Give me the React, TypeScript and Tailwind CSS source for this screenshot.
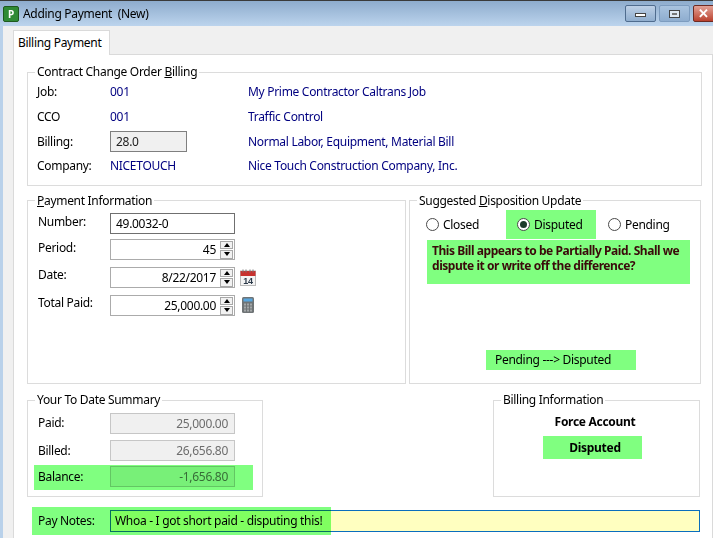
import React from "react";

const font = "[font-family:'Noto_Sans','Open_Sans',sans-serif]";

function Group({ legend, className, children, legendClass = "" }: { legend: React.ReactNode; className: string; children: React.ReactNode; legendClass?: string }) {
  return (
    <fieldset className={`border border-[#dcdcdc] min-w-0 ${className}`}>
      <legend className={`ml-[7px] px-[2px] text-[12px] leading-[16px] text-[#000] ${legendClass}`}>{legend}</legend>
      {children}
    </fieldset>
  );
}

function Spin() {
  return (
    <div className="ml-auto mr-[1px] flex h-[18px] w-[13px] flex-col gap-[1px]">
      <div className="flex h-[8.5px] items-center justify-center border border-[#a8a8a8] bg-[#f2f2f2]">
        <div className="h-0 w-0 border-x-[3.5px] border-b-[4px] border-x-transparent border-b-black" />
      </div>
      <div className="flex h-[8.5px] items-center justify-center border border-[#a8a8a8] bg-[#f2f2f2]">
        <div className="h-0 w-0 border-x-[3.5px] border-t-[4px] border-x-transparent border-t-black" />
      </div>
    </div>
  );
}

function SpinField({ label, value, after, top, labelTop }: { label: string; value: string; after?: React.ReactNode; top: string; labelTop: string }) {
  return (
    <div className={`flex items-start ${top}`}>
      <div className={`w-[82px] pl-[10px] text-[12px] leading-[16px] ${labelTop}`}>{label}</div>
      <div className="flex h-[21px] w-[125px] items-center border border-[#ababab] bg-white pl-[4px]">
        <span className="flex-1 pr-[4px] text-right text-[12px] leading-[16px]">{value}</span>
        <Spin />
      </div>
      {after}
    </div>
  );
}

function Calendar() {
  return (
    <svg width="16" height="17" viewBox="0 0 16 17" className="ml-[5px] mt-[2px]">
      <rect x="0.5" y="2" width="15" height="14.5" fill="#f4f4f4" stroke="#b9b9b9" />
      <rect x="0.5" y="2" width="15" height="5" fill="#c8312e" />
      <path d="M3 0.5v3M6 0.5v3M10 0.5v3M13 0.5v3" stroke="#777" strokeWidth="1" />
      <text x="8" y="15" textAnchor="middle" fontSize="9" fontWeight="700" fill="#2c3a4a" fontFamily="Liberation Sans, sans-serif">14</text>
    </svg>
  );
}

function Calculator() {
  return (
    <svg width="12" height="16" viewBox="0 0 12 16" className="ml-[7px] mt-[2px]">
      <rect x="0" y="0" width="12" height="16" rx="1.5" fill="#6f7476" />
      <rect x="1.5" y="1.5" width="9" height="3" fill="#58a7e0" />
      <path d="M2 6.5h2v2h-2zM5 6.5h2v2h-2zM8 6.5h2v2h-2zM2 9.5h2v2h-2zM5 9.5h2v2h-2zM8 9.5h2v2h-2zM2 12.5h2v2h-2zM5 12.5h2v2h-2zM8 12.5h2v2h-2z" fill="#a4a8a9" />
    </svg>
  );
}

function Radio({ on }: { on?: boolean }) {
  return (
    <div className="mr-[4px] flex h-[13px] w-[13px] items-center justify-center rounded-full border border-[#4a4a4a] bg-white">
      {on && <div className="h-[7px] w-[7px] rounded-full bg-[#1c3b2a]" />}
    </div>
  );
}

function Disabled({ value }: { value: string }) {
  return (
    <div className="flex h-[21px] w-[125px] items-center justify-end border border-[#c6c6c6] bg-[#f0f0f0] pr-[6px] text-[12px] leading-[16px] text-[#6d6d6d]">
      {value}
    </div>
  );
}

export default function App() {
  return (
    <div className={`flex h-[538px] w-[713px] flex-col overflow-hidden bg-[#b9d1ea] tracking-[-0.3px] text-black ${font}`}>
      <div className="h-[1px] bg-[#3a3a3a]" />
      <div className="flex h-[25px] items-center bg-gradient-to-b from-[#8eaccd] to-[#bcd4ed] pl-[3px]">
        <div className="flex h-[16px] w-[16px] items-center justify-center rounded-[2px] border border-[#1e5a1e] bg-[#2f8a35] text-[10px] font-bold leading-none text-white">P</div>
        <div className="ml-[4px] whitespace-pre text-[12px] leading-[16px]">Adding Payment  (New)</div>
        <div className="ml-auto flex h-[17px] items-stretch gap-[3px] self-start mt-[4px] -mr-[1px]">
          <div className="flex w-[31px] items-center justify-center rounded-[2px] border border-[#4f6c8e] bg-gradient-to-b from-[#bdd0e6] to-[#90aecf]">
            <div className="mt-[3px] h-[4px] w-[11px] border border-[#444] bg-white" />
          </div>
          <div className="flex w-[31px] items-center justify-center rounded-[2px] border border-[#7d9cbf] bg-gradient-to-b from-[#a9c3df] to-[#8eadcf]">
            <div className="flex h-[8px] w-[11px] items-center justify-center border border-[#444] bg-[#dfe8f2]"><div className="h-[2px] w-[5px] bg-[#777]" /></div>
          </div>
          <div className="flex w-[21px] items-center justify-center rounded-l-[2px] border border-[#6e2a22] bg-gradient-to-b from-[#e2a196] to-[#b9402e] text-[13px] font-bold leading-none text-white">✕</div>
        </div>
      </div>
      <div className="ml-[3px] flex min-h-0 flex-1 flex-col bg-[#f0f0f0] pl-[10px] pt-[4px]">
        <div className="relative z-10 -mb-px flex h-[25px] w-[97px] items-center border border-b-0 border-[#dadada] bg-white pl-[4px] text-[12px] leading-[16px]">Billing Payment</div>
        <div className="min-h-0 flex-1 border border-[#dadada] border-b-0 bg-white pl-[13px] pr-[10px] pt-[9px]">
          <Group
            legend={<>Contract Change Order <u>B</u>illing</>}
            className="h-[122px] w-[675px]"
          >
            <div className="grid grid-cols-[73px_138px_1fr] grid-rows-[25px_25px_25px_23px] items-center pl-[9px] text-[12px] leading-[16px] -mt-[1px]">
              <div>Job:</div>
              <div className="text-[#000080]">001</div>
              <div className="text-[#000080]">My Prime Contractor Caltrans Job</div>
              <div>CCO</div>
              <div className="text-[#000080]">001</div>
              <div className="text-[#000080]">Traffic Control</div>
              <div>Billing:</div>
              <div className="flex h-[21px] w-[77px] items-center border border-[#7f7f7f] bg-[#f0f0f0] pl-[5px] text-[#222]">28.0</div>
              <div className="text-[#000080]">Normal Labor, Equipment, Material Bill</div>
              <div>Company:</div>
              <div className="text-[#000080]">NICETOUCH</div>
              <div className="text-[#000080]">Nice Touch Construction Company, Inc.</div>
            </div>
          </Group>

          <div className="mt-[6px] flex gap-[3px]">
            <Group legend={<><u>P</u>ayment Information</>} legendClass="translate-y-[1px]" className="h-[192px] w-[379px]">
              <div className="mt-[5px] flex items-start">
                <div className="w-[82px] pl-[10px] pt-[1px] text-[12px] leading-[16px]">Number:</div>
                <div className="flex h-[21px] w-[125px] items-center border border-[#6f6f6f] bg-white pl-[5px] text-[12px] leading-[16px]">49.0032-0</div>
              </div>
              <SpinField label="Period:" value="45" top="mt-[5px]" labelTop="pt-[1px]" />
              <SpinField label="Date:" value="8/22/2017" top="mt-[7px]" labelTop="pt-0" after={<Calendar />} />
              <SpinField label="Total Paid:" value="25,000.00" top="mt-[7px]" labelTop="pt-0" after={<Calculator />} />
            </Group>
            <Group legend={<>Suggested <u>D</u>isposition Update</>} legendClass="translate-y-[1px]" className="h-[192px] w-[292px]">
              <div className="mt-[2px] flex items-stretch pl-[16px] text-[12px] leading-[16px]">
                <div className="flex w-[80px] items-center"><Radio />Closed</div>
                <div className="flex h-[29px] w-[90px] items-center bg-[#80ff80] pl-[11px]"><Radio on />Disputed</div>
                <div className="ml-[12px] flex items-center"><Radio />Pending</div>
              </div>
              <div className="ml-[17px] mt-[1px] h-[44px] w-[263px] whitespace-nowrap bg-[#80ff80] px-[5px] pt-[3px] text-[12px] font-bold leading-[15px] tracking-[-0.45px] text-[#3a0a0a]">
                This Bill appears to be Partially Paid. Shall we<br />dispute it or write off the difference?
              </div>
              <div className="ml-[76px] mt-[66px] flex h-[20px] w-[150px] items-center bg-[#80ff80] pl-[9px] text-[12px] leading-[16px]">Pending ---&gt; Disputed</div>
            </Group>
          </div>

          <div className="mt-[8px] flex items-start justify-between pr-[2px]">
            <Group legend="Your To Date Summary" className="h-[105px] w-[236px]">
              <div className="relative">
                <div className="mt-[5px] flex items-center">
                  <div className="w-[82px] pl-[10px] pb-[2px] text-[12px] leading-[16px]">Paid:</div>
                  <Disabled value="25,000.00" />
                </div>
                <div className="mt-[6px] flex items-center">
                  <div className="w-[82px] pl-[10px] text-[12px] leading-[16px]">Billed:</div>
                  <Disabled value="26,656.80" />
                </div>
                <div className="mt-[5px] flex items-center">
                  <div className="w-[82px] pl-[10px] text-[12px] leading-[16px]">Balance:</div>
                  <Disabled value="-1,656.80" />
                </div>
                <div className="absolute bottom-[-3px] left-[6px] h-[25px] w-[219px] bg-[#80ff80] mix-blend-multiply" />
              </div>
            </Group>
            <Group legend="Billing Information" className="h-[105px] w-[207px]">
              <div className="mt-[6px] pr-[3px] text-center text-[12px] font-bold leading-[16px]">Force Account</div>
              <div className="ml-[49px] mt-[6px] flex h-[23px] w-[99px] items-center justify-center bg-[#80ff80] pl-[5px] text-[12px] font-bold leading-[16px]">Disputed</div>
            </Group>
          </div>

          <div className="relative ml-[5px] mt-[10px] flex h-[28px] w-[668px] items-center">
            <div className="w-[78px] pl-[6px] text-[12px] leading-[16px]">Pay Notes:</div>
            <div className="flex h-[22px] w-[590px] items-center border border-[#0a6ebd] bg-[#ffffc0] pl-[4px] text-[12px] leading-[16px]">Whoa - I got short paid - disputing this!</div>
            <div className="absolute left-0 top-0 h-[28px] w-[299px] bg-[#80ff80] mix-blend-multiply" />
          </div>
        </div>
      </div>
    </div>
  );
}
